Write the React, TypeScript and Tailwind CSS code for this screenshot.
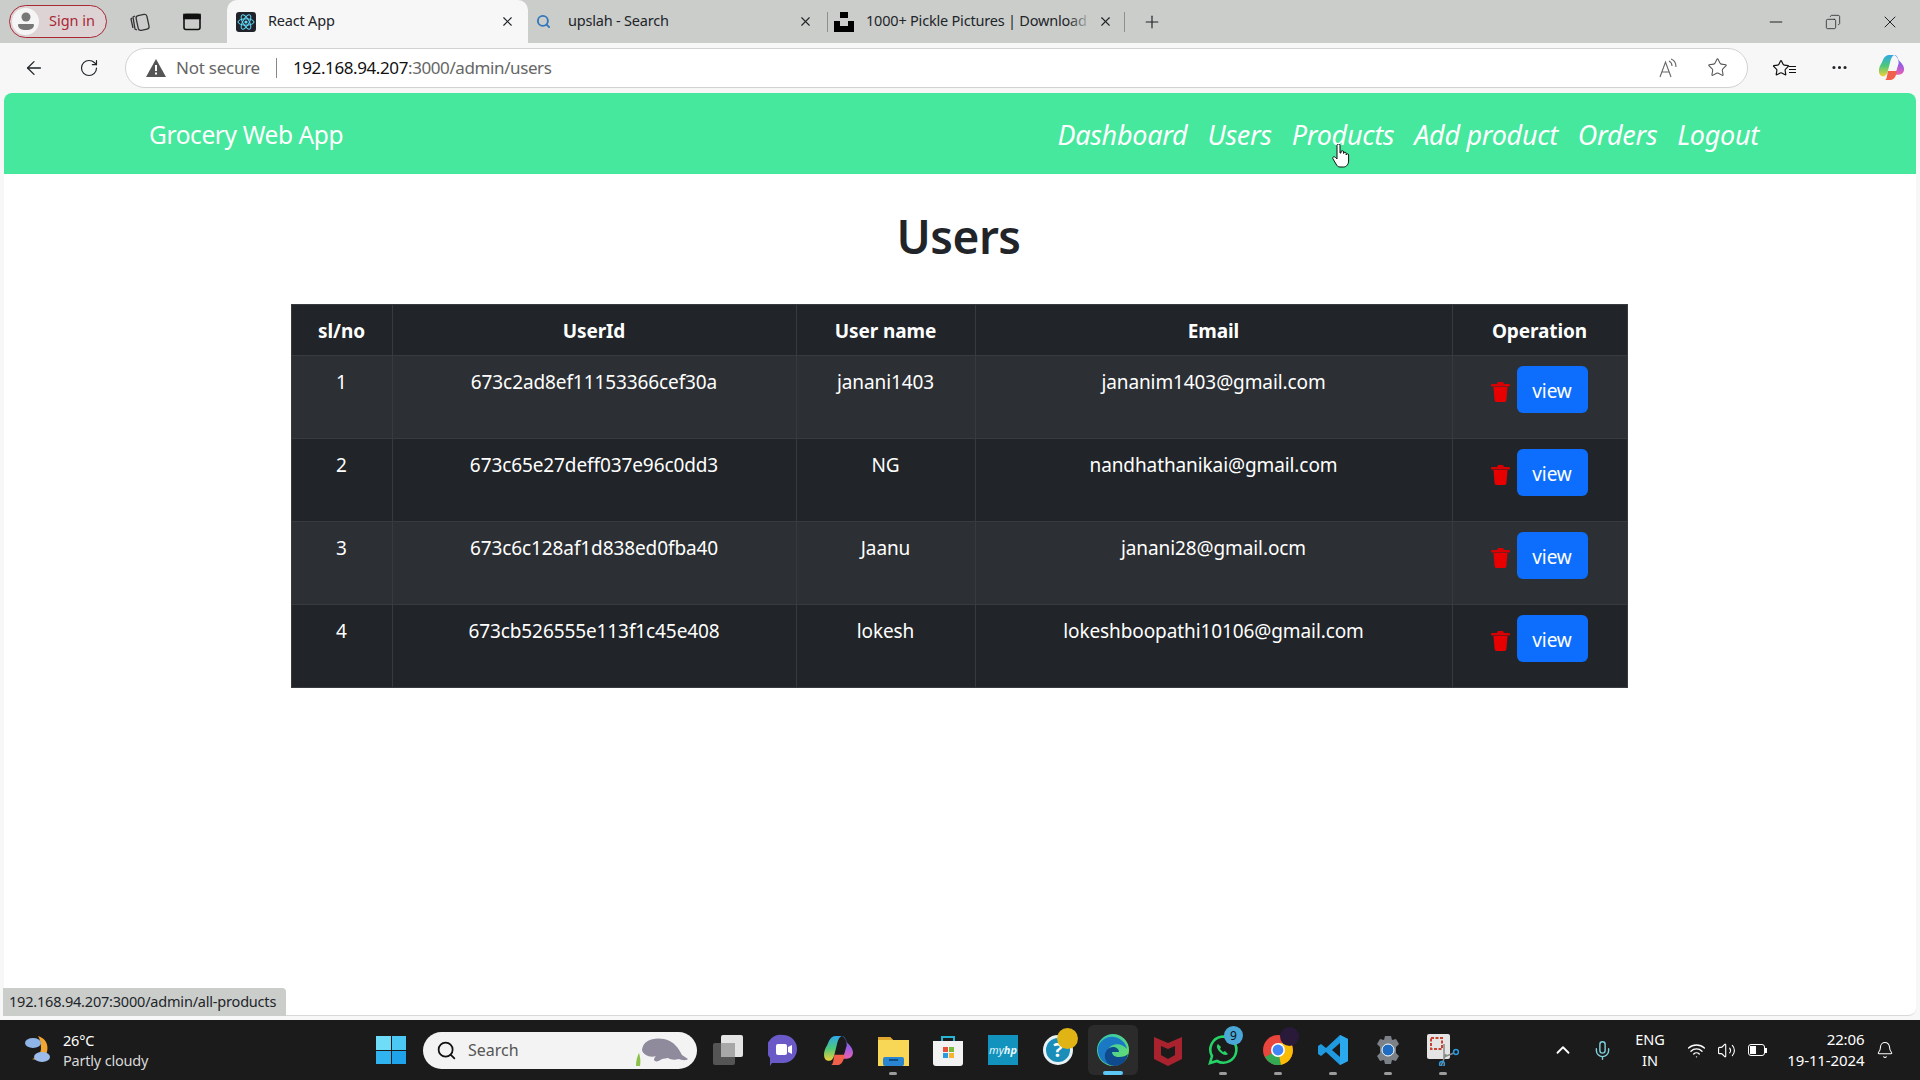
import { ArrowLeft, RotateCw, X, Plus, Minus, Star, MoreHorizontal, Search, ChevronUp, Mic, Wifi, Volume2, Bell, Copy } from "lucide-react";

const users = [
  ["1", "673c2ad8ef11153366cef30a", "janani1403", "jananim1403@gmail.com"],
  ["2", "673c65e27deff037e96c0dd3", "NG", "nandhathanikai@gmail.com"],
  ["3", "673c6c128af1d838ed0fba40", "Jaanu", "janani28@gmail.ocm"],
  ["4", "673cb526555e113f1c45e408", "lokesh", "lokeshboopathi10106@gmail.com"],
];

const links = ["Dashboard", "Users", "Products", "Add product", "Orders", "Logout"];

function ReactIcon() {
  return (
    <svg width="20" height="20" viewBox="0 0 20 20">
      <rect width="20" height="20" rx="3" fill="#20232a" />
      <g fill="none" stroke="#61dafb" strokeWidth="1">
        <ellipse cx="10" cy="10" rx="8" ry="3.2" />
        <ellipse cx="10" cy="10" rx="8" ry="3.2" transform="rotate(60 10 10)" />
        <ellipse cx="10" cy="10" rx="8" ry="3.2" transform="rotate(120 10 10)" />
      </g>
      <circle cx="10" cy="10" r="1.6" fill="#61dafb" />
    </svg>
  );
}

function CopilotIcon({ size = 30, id }: { size?: number; id: string }) {
  return (
    <svg width={size} height={size} viewBox="0 0 30 30">
      <defs>
        <linearGradient id={`${id}a`} x1="0" y1="0" x2="0" y2="1">
          <stop offset="0" stopColor="#2fa8ea" />
          <stop offset="0.5" stopColor="#4cc77a" />
          <stop offset="1" stopColor="#f2d23a" />
        </linearGradient>
        <linearGradient id={`${id}b`} x1="0" y1="0" x2="0" y2="1">
          <stop offset="0" stopColor="#3f7fe8" />
          <stop offset="0.5" stopColor="#9a5ce6" />
          <stop offset="1" stopColor="#e860b0" />
        </linearGradient>
      </defs>
      <path d="M12 1h6c-2 1-3 3-4 6l-3 12c-1 4-3 6-5 6-3 0-5-2-5-6 0-3 1-6 3-9 2-5 4-9 8-9z" fill={`url(#${id}a)`} />
      <path d="M18 1c3 0 4 3 5 6 3 3 6 6 6 10 0 4-3 6-6 6h-5c1-1 2-3 3-6l2-7c0-4-2-8-5-9z" fill={`url(#${id}b)`} />
      <path d="M11 19h10c-1 6-3 10-7 10H8c2-1 2-5 3-10z" fill="#f0604a" />
    </svg>
  );
}

function Trash() {
  return (
    <svg width="19" height="21" viewBox="0 0 19 21" className="shrink-0">
      <path d="M7 1h5l1 2h5a1 1 0 0 1 0 2.4H1A1 1 0 0 1 1 3h5z" fill="#d80000" />
      <path d="M2.5 6h14L15.4 19a2 2 0 0 1-2 2H5.6a2 2 0 0 1-2-2z" fill="#e80000" />
    </svg>
  );
}

function TaskIcon({ children, dot, active }: { children: React.ReactNode; dot?: boolean; active?: boolean }) {
  return (
    <div className={`relative flex h-[50px] w-[50px] items-center justify-center rounded-md ${active ? "bg-[#2b2b2b]" : ""}`}>
      {children}
      {dot && <div className="absolute bottom-0 h-[3px] w-[8px] rounded-full bg-[#9b9b9b]" />}
      {active && <div className="absolute bottom-0 h-[4px] w-[20px] rounded-full bg-[#5cc8f5]" />}
    </div>
  );
}

export default function App() {
  return (
    <div className="relative flex h-[1080px] w-[1920px] flex-col overflow-hidden bg-[#f7f7f7] font-['Noto_Sans','Open_Sans',sans-serif] text-[#212529]">
      {/* Tab strip */}
      <div className="flex h-[43px] shrink-0 items-center bg-[#cbcdcb] pl-[9px]">
        <div className="flex h-[33px] w-[98px] items-center gap-[10px] rounded-full border border-[#a82836] bg-[#ddd3d4] pb-[1px] pl-[2px]">
          <div className="flex h-[27px] w-[27px] items-center justify-center rounded-full bg-[#f5f5f5]">
            <svg width="18" height="20" viewBox="0 0 18 20"><circle cx="9" cy="6" r="4.5" fill="#777" /><path d="M2 13h14a1 1 0 0 1 1 1c0 3-3 5-8 5s-8-2-8-5a1 1 0 0 1 1-1z" fill="#777" /></svg>
          </div>
          <span className="text-[14.5px] text-[#a82836]">Sign in</span>
        </div>
        <div className="ml-[22px] w-[22px]">
          <svg width="22" height="22" viewBox="0 0 22 22" fill="none" stroke="#333" strokeWidth="1.3"><rect x="8" y="4" width="11" height="15" rx="2.5" transform="rotate(-12 13 11)" /><path d="M6 5l-2 1 2 12 2 1M3 7l-1 1 2 9" /></svg>
        </div>
        <div className="ml-[31px] w-[20px]">
          <svg width="20" height="20" viewBox="0 0 20 20" fill="none" stroke="#111" strokeWidth="1.6"><rect x="2" y="2.5" width="16" height="15" rx="2" /><rect x="2" y="2.5" width="16" height="4" fill="#111" /></svg>
        </div>
        <div className="ml-[25px] flex h-[43px] w-[301px] items-center rounded-t-[10px] bg-[#f7f7f7] pl-[9px] pr-[13px]">
          <ReactIcon />
          <span className="ml-[12px] flex-1 pb-[2px] text-[14.5px] tracking-[-0.2px]">React App</span>
          <X size={15} strokeWidth={1.8} />
        </div>
        <div className="flex h-[43px] w-[299px] items-center pl-[8px] pr-[14px]">
          <Search size={15} strokeWidth={3} className="text-[#3277bc]" />
          <span className="ml-[17px] flex-1 pb-[2px] text-[14.5px] tracking-[-0.2px]">upslah - Search</span>
          <X size={15} strokeWidth={1.8} />
        </div>
        <div className="h-[20px] w-px bg-[#8f8f8f]" />
        <div className="flex h-[43px] w-[296px] items-center pl-[6px] pr-[11px]">
          <svg width="20" height="20" viewBox="0 0 20 20" fill="#000" className="shrink-0"><rect x="6" y="0" width="8" height="6" /><path d="M0 9h6v5h8V9h6v11H0z" /></svg>
          <div className="relative ml-[12px] flex-1 overflow-hidden whitespace-nowrap pb-[2px] text-[14.5px] tracking-[-0.2px]">
            1000+ Pickle Pictures | Download
            <div className="absolute inset-y-0 right-0 w-[24px] bg-gradient-to-r from-transparent to-[#cbcdcb]" />
          </div>
          <X size={15} strokeWidth={1.8} className="ml-[6px] shrink-0" />
        </div>
        <div className="h-[20px] w-px bg-[#8f8f8f]" />
        <Plus size={20} strokeWidth={1.4} className="ml-[17px]" />
        <div className="flex-1" />
        <div className="flex items-center gap-[39px] pr-[20px]">
          <Minus size={20} strokeWidth={1.2} />
          <Copy size={16} strokeWidth={1.2} className="-scale-x-100" />
          <X size={20} strokeWidth={1.2} />
        </div>
      </div>

      {/* Toolbar */}
      <div className="flex h-[50px] shrink-0 items-center pb-px pl-[23px]">
        <ArrowLeft size={22} strokeWidth={1.4} />
        <RotateCw size={20} strokeWidth={1.4} className="ml-[34px]" />
        <div className="ml-[26px] flex h-[40px] w-[1623px] items-center rounded-full border border-[#d2d2d2] bg-white pl-[20px] pr-[19px]">
          <svg width="20" height="18" viewBox="0 0 20 18"><path d="M10 0l10 18H0z" fill="#555" /><rect x="9" y="6" width="2" height="6" fill="#fff" /><rect x="9" y="13.5" width="2" height="2" fill="#fff" /></svg>
          <span className="ml-[10px] text-[17px] tracking-[-0.25px] text-[#666]">Not secure</span>
          <div className="ml-[16px] h-[20px] w-px bg-[#888]" />
          <span className="ml-[16px] text-[17px] tracking-[-0.4px] text-[#111]">192.168.94.207<span className="text-[#666]">:3000/admin/users</span></span>
          <div className="flex-1" />
          <svg width="18" height="20" viewBox="0 0 18 20" fill="none" stroke="#666" strokeWidth="1.1">
            <path d="M1 19L6.5 4 12 19M3 14h7" />
            <path d="M10 3c2 1 3 3 3 5M12 1c3 1 5 4 5 8" />
          </svg>
          <Star size={21} strokeWidth={1.2} className="ml-[30px] text-[#555]" />
        </div>
        <div className="flex flex-1 items-center pl-[24px]">
          <div className="relative">
            <Star size={18} strokeWidth={1.6} className="text-[#111]" />
            <div className="absolute -right-[6px] top-[7px] flex flex-col gap-[2px]">
              <div className="h-px w-[7px] bg-[#111]" /><div className="h-px w-[7px] bg-[#111]" /><div className="h-px w-[7px] bg-[#111]" />
            </div>
          </div>
          <MoreHorizontal size={19} strokeWidth={2} className="ml-[40px]" />
          <div className="ml-[29px]"><CopilotIcon size={27} id="ct" /></div>
        </div>
      </div>

      {/* Page */}
      <div className="min-h-0 flex-1 px-[4px] pb-[4px]">
        <div className="h-full overflow-hidden rounded-[8px] border-b border-[#d8d8d8] bg-white">
          <nav className="flex h-[81px] items-center justify-between bg-[#45e89d] pl-[145px] pr-[157px] pt-[4px] text-white">
            <span className="text-[24.5px] tracking-[-0.4px]">Grocery Web App</span>
            <div className="flex gap-[20px]">
              {links.map((l) => (
                <span key={l} className="text-[27px] italic tracking-[-0.3px]">{l}</span>
              ))}
            </div>
          </nav>
          <h1 className="mt-[26px] pr-[3px] text-center text-[46px] font-semibold leading-[72px] tracking-[-0.5px]">Users</h1>
          <div className="mt-[32px] flex justify-center pr-[2px]">
            <table className="w-[1336px] table-fixed border-collapse bg-[#212529] text-center text-[19px] tracking-[-0.1px] text-white">
              <colgroup>
                <col className="w-[101px]" />
                <col className="w-[404px]" />
                <col className="w-[179px]" />
                <col className="w-[477px]" />
                <col className="w-[175px]" />
              </colgroup>
              <thead>
                <tr className="h-[51px]">
                  {["sl/no", "UserId", "User name", "Email", "Operation"].map((h) => (
                    <th key={h} className="border border-[#373b3e] pt-[2px] align-middle font-bold">{h}</th>
                  ))}
                </tr>
              </thead>
              <tbody>
                {users.map((u, i) => (
                  <tr key={u[0]} className={`h-[83px] ${i % 2 === 0 ? "bg-[#2c3034]" : "bg-[#212529]"}`}>
                    {u.map((c) => (
                      <td key={c} className="border border-[#373b3e] pt-[11px] align-top leading-[30px]">{c}</td>
                    ))}
                    <td className="border border-[#373b3e] pt-[10px] align-top">
                      <div className="flex items-center pl-[38px]">
                        <div className="mt-[4px]"><Trash /></div>
                        <button className="ml-[7px] h-[47px] w-[71px] rounded-[6px] bg-[#0d6efd] pt-[3px] text-[19px] text-white">view</button>
                      </div>
                    </td>
                  </tr>
                ))}
              </tbody>
            </table>
          </div>
        </div>
      </div>

      {/* Taskbar */}
      <div className="flex h-[60px] shrink-0 items-center bg-[#1b1b1b] text-white">
        <div className="flex w-[376px] items-center pl-[22px]">
          <svg width="32" height="32" viewBox="0 0 32 32">
            <path d="M16 2c7 2 11 8 9 16-2 6-9 9-15 7 5-1 9-5 9-11 0-5-1-9-3-12z" fill="#f0a630" />
            <ellipse cx="11" cy="9" rx="8" ry="5" fill="#8fb4e8" />
            <ellipse cx="20" cy="23" rx="8" ry="5" fill="#9cbcec" />
          </svg>
          <div className="ml-[9px] flex flex-col pb-[1px] text-[14.5px] leading-[20px] tracking-[-0.2px]">
            <span>26°C</span>
            <span className="text-[#d8d8d8]">Partly cloudy</span>
          </div>
        </div>
        <div className="grid h-[28px] w-[30px] grid-cols-2 gap-[1px]">
          <div className="bg-[#6fdcf8]" /><div className="bg-[#4cc8f5]" /><div className="bg-[#2fb4f0]" /><div className="bg-[#1fa3ea]" />
        </div>
        <div className="ml-[17px] flex h-[37px] w-[274px] items-center rounded-full bg-[#f3f3f3] pl-[13px] text-[#333]">
          <Search size={21} strokeWidth={2} className="text-[#111]" />
          <span className="ml-[11px] flex-1 text-[16px] text-[#555]">Search</span>
          <svg width="56" height="34" viewBox="0 0 56 34" className="mr-[7px] mt-[2px]">
            <path d="M2 32c0-7 2-11 3-13 1 3 2 8 1 13z" fill="#8cc04a" />
            <path d="M8 16C9 6 20 3 30 5c10 2 15 10 18 16l6 4c-2 2-7 1-9 0-4 1-8 1-11-1l-6 1c-4 3-7 3-8 1 0-2 1-3 2-4-6 2-13-1-14-6z" fill="#8f8a9c" />
          </svg>
        </div>
        <div className="ml-[6px] flex items-center gap-[5px]">
          <TaskIcon>
            <svg width="30" height="30" viewBox="0 0 30 30"><rect x="0" y="8" width="22" height="22" rx="2" fill="#555" /><rect x="8" y="0" width="22" height="22" rx="2" fill="#e4e4e4" /><rect x="8" y="8" width="14" height="14" fill="#a8a8a8" /></svg>
          </TaskIcon>
          <TaskIcon>
            <svg width="30" height="32" viewBox="0 0 30 32"><path d="M15 1a14 14 0 0 1 0 28H4l-2 3v-8A14 14 0 0 1 15 1z" fill="#6a5ac8" /><rect x="8" y="10" width="11" height="11" rx="2" fill="#fff" /><path d="M20 13l4-2v9l-4-2z" fill="#fff" /></svg>
          </TaskIcon>
          <TaskIcon><CopilotIcon size={31} id="cb" /></TaskIcon>
          <TaskIcon dot>
            <svg width="31" height="32" viewBox="0 0 31 32"><path d="M0 3h12l3 3h16v26H0z" fill="#f8d757" /><path d="M0 3h12l3 3H0z" fill="#e0a92e" /><rect x="5" y="23" width="21" height="9" rx="2" fill="#2a85d0" /><rect x="11" y="25" width="9" height="2" fill="#0f4f88" /></svg>
          </TaskIcon>
          <TaskIcon>
            <svg width="30" height="32" viewBox="0 0 30 32"><path d="M9 8V3h12v5" fill="none" stroke="#25b6d6" strokeWidth="2" /><path d="M0 7h30v22a3 3 0 0 1-3 3H3a3 3 0 0 1-3-3z" fill="#f2f2f2" /><rect x="10" y="13" width="5" height="5" fill="#e8503a" /><rect x="16" y="13" width="5" height="5" fill="#7bbb3c" /><rect x="10" y="19" width="5" height="5" fill="#2a9be0" /><rect x="16" y="19" width="5" height="5" fill="#f4b52c" /></svg>
          </TaskIcon>
          <TaskIcon>
            <div className="flex h-[30px] w-[30px] items-center justify-center bg-[#1193be] text-[11px] italic text-[#e8f6fa]">my<b>hp</b></div>
          </TaskIcon>
          <TaskIcon>
            <div className="relative flex h-[30px] w-[30px] items-center justify-center rounded-full border-[3px] border-[#e8f2f6] bg-[#1a8db8] text-[20px] font-bold text-white">
              ?
              <div className="absolute -right-[8px] -top-[10px] h-[21px] w-[21px] rounded-full bg-[#e0b414]" />
            </div>
          </TaskIcon>
          <TaskIcon active>
            <svg width="32" height="32" viewBox="0 0 32 32">
              <defs><linearGradient id="edg" x1="0" y1="0" x2="1" y2="1"><stop offset="0" stopColor="#2fc4b0" /><stop offset="1" stopColor="#6ee06a" /></linearGradient></defs>
              <circle cx="16" cy="16" r="16" fill="url(#edg)" />
              <path d="M1 14C3 6 10 2 17 3c7 1 12 6 13 12-4-5-11-6-16-3-4 3-5 9-2 14 2 3 5 5 9 5C10 33 0 26 1 14z" fill="#1b78c4" />
              <path d="M31 20c-1 7-7 12-13 12-5 0-9-3-10-8-1-6 3-11 8-11 3 0 6 2 6 5h-7c0 3 3 5 7 5 4 0 7-1 9-3z" fill="#0f4a8c" />
            </svg>
          </TaskIcon>
          <TaskIcon>
            <svg width="28" height="32" viewBox="0 0 28 32"><path d="M0 3l14 6 14-6v22l-14 7-14-7z" fill="#a8232e" /><path d="M7 12l7 3 7-3v9l-7 4-7-4z" fill="#1b1b1b" /></svg>
          </TaskIcon>
          <TaskIcon dot>
            <div className="relative">
              <svg width="30" height="30" viewBox="0 0 30 30" fill="none"><path d="M2 28l2-7A13 13 0 1 1 9 26z" stroke="#25d366" strokeWidth="2.6" /><path d="M10 9c-2 2-1 5 2 8s6 4 8 2l-3-3-2 1-3-3 1-2z" fill="#25d366" /></svg>
              <div className="absolute -right-[5px] -top-[9px] flex h-[19px] w-[19px] items-center justify-center rounded-full bg-[#4aa8d8] text-[12px] text-[#111]">9</div>
            </div>
          </TaskIcon>
          <TaskIcon dot>
            <div className="relative">
              <svg width="30" height="30" viewBox="0 0 30 30"><circle cx="15" cy="15" r="15" fill="#e8453c" /><path d="M15 15L2 22A15 15 0 0 0 18 30z" fill="#34a853" /><path d="M15 15l3 15A15 15 0 0 0 28 8H15z" fill="#fbbc05" /><circle cx="15" cy="15" r="7" fill="#fff" /><circle cx="15" cy="15" r="5.4" fill="#4285f4" /></svg>
              <div className="absolute -right-[6px] -top-[8px] h-[19px] w-[19px] rounded-full bg-[#2a1a3a]" />
            </div>
          </TaskIcon>
          <TaskIcon dot>
            <svg width="30" height="30" viewBox="0 0 30 30"><path d="M22 0l8 4v22l-8 4L8 17l-5 4-3-2V11l3-2 5 4z" fill="#1f9ae0" /><path d="M22 8l-8 7 8 7z" fill="#1b1b1b" /><path d="M22 0l8 4v22l-8 4z" fill="#2aa9ee" /></svg>
          </TaskIcon>
          <TaskIcon dot>
            <svg width="30" height="30" viewBox="0 0 30 30"><path d="M12 1h6l1 4 4-1 3 5-3 3v6l3 3-3 5-4-1-1 4h-6l-1-4-4 1-3-5 3-3v-6L4 9l3-5 4 1z" fill="#7c8087" /><circle cx="15" cy="15" r="6" fill="#1f6cc0" stroke="#fff" strokeWidth="1" /></svg>
          </TaskIcon>
          <TaskIcon dot>
            <svg width="32" height="32" viewBox="0 0 32 32"><rect x="0" y="0" width="23" height="25" rx="2" fill="#e4e4e4" /><rect x="4" y="4" width="11" height="11" fill="none" stroke="#c8402e" strokeWidth="2" strokeDasharray="3 1.5" /><path d="M17 10v13l10-4M14 32l5-12" stroke="#888" strokeWidth="1.5" fill="none" /><circle cx="29" cy="18" r="2.4" fill="none" stroke="#2a9be0" strokeWidth="1.5" /><circle cx="15" cy="30" r="2.4" fill="none" stroke="#2a9be0" strokeWidth="1.5" /></svg>
          </TaskIcon>
        </div>
        <div className="flex flex-1 items-center pl-[84px]">
          <ChevronUp size={22} strokeWidth={2} />
          <Mic size={21} strokeWidth={1.6} className="ml-[18px] text-[#7fd0dc]" />
          <div className="ml-[21px] flex w-[32px] flex-col items-center text-[14.5px] leading-[21px]"><span>ENG</span><span>IN</span></div>
          <Wifi size={19} strokeWidth={1.7} className="ml-[21px]" />
          <Volume2 size={19} strokeWidth={1.4} className="ml-[11px]" />
          <div className="ml-[12px] flex items-center">
            <div className="h-[12px] w-[17px] rounded-[3px] border border-white p-[1px]"><div className="h-full w-[6px] bg-white" /></div>
            <div className="h-[5px] w-[1.5px] bg-white" />
          </div>
          <div className="ml-[20px] flex w-[78px] flex-col items-end whitespace-nowrap text-[15px] leading-[21px] tracking-[-0.1px]"><span>22:06</span><span>19-11-2024</span></div>
          <Bell size={18} strokeWidth={1.4} className="ml-[11px]" />
        </div>
      </div>

      {/* Status bubble */}
      <div className="absolute bottom-[64px] left-[3px] flex h-[28px] w-[283px] items-center rounded-tr-[4px] bg-[#cbcdcb] pl-[6px] text-[14.5px] tracking-[-0.2px]">192.168.94.207:3000/admin/all-products</div>

      {/* Cursor */}
      <svg width="18" height="24" viewBox="0 0 18 24" className="absolute left-[1332px] top-[144px]">
        <path d="M5 1.5a1.5 1.5 0 0 1 3 0V9l1 0V8a1.3 1.3 0 0 1 2.6 0v1.5a1.3 1.3 0 0 1 2.6 0V11a1.2 1.2 0 0 1 2.4 0v6c0 3-2 6-5 6H8c-2 0-3-1-4-3l-3-5c-1-2 1-3 2.5-1.5L5 15z" fill="#fff" stroke="#111" strokeWidth="1" />
      </svg>
    </div>
  );
}
